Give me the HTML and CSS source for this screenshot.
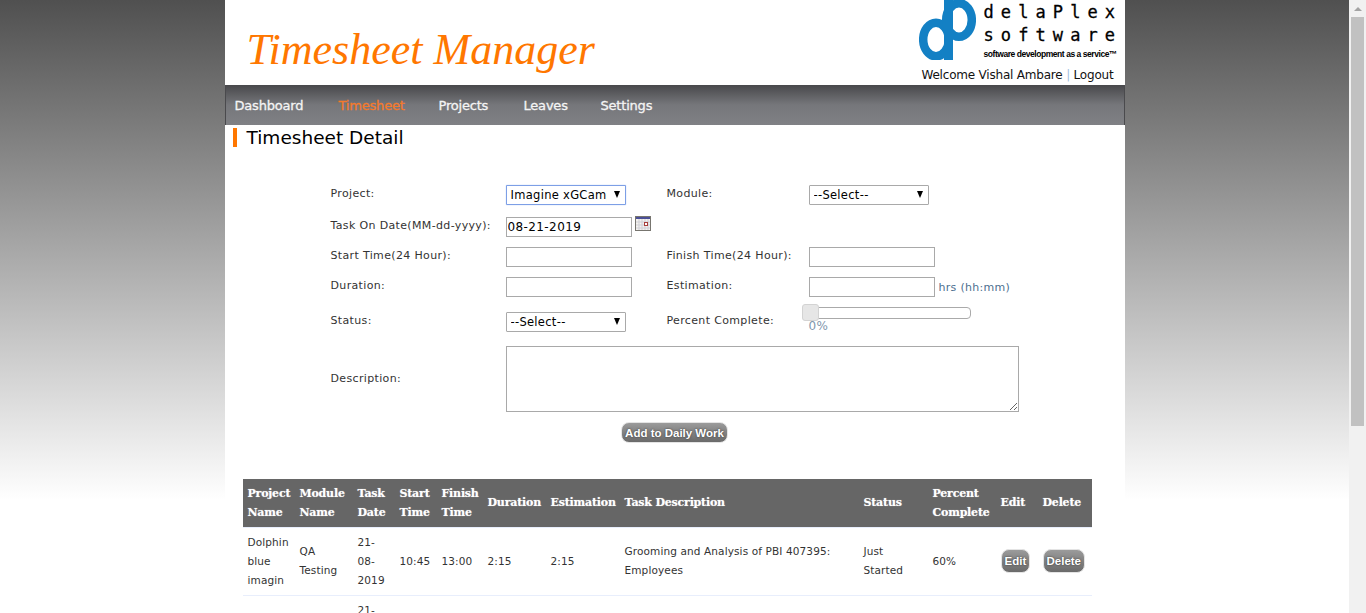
FILE: index.html
```html
<!DOCTYPE html>
<html lang="en">
<head>
    <meta charset="UTF-8">
    <meta name="viewport" content="width=device-width, initial-scale=1.0">
    <title>Timesheet Manager</title>
    <link rel="stylesheet" href="styles.css">
</head>
<body>

    <div class="viewport">
        <div class="page">

            <!-- header -->
            <div class="header">
                <div class="app-title">Timesheet Manager</div>
                <div class="header-right">
                    <div class="logo">
                        <svg class="logo-mark" width="57" height="60" viewBox="0 0 57 60">
                            <g fill="none" stroke="#1380c4" stroke-width="8.5">
                                <ellipse cx="17" cy="39.5" rx="12.8" ry="16.8"/>
                                <ellipse cx="40" cy="20" rx="12.8" ry="16.8"/>
                            </g>
                            <rect x="25" y="0" width="9" height="60" fill="#1380c4"/>
                        </svg>
                        <div class="logo-text">
                            <div class="logo-name">delaPlex</div>
                            <div class="logo-name">software</div>
                            <div class="logo-tag">software development as a service™</div>
                        </div>
                    </div>
                    <div class="welcome">Welcome Vishal Ambare <span class="sep">|</span> Logout</div>
                </div>
            </div>

            <!-- menu -->
            <div class="nav">
                <a class="nav-dashboard">Dashboard</a>
                <a class="nav-timesheet active">Timesheet</a>
                <a class="nav-projects">Projects</a>
                <a class="nav-leaves">Leaves</a>
                <a>Settings</a>
            </div>

            <h1 class="page-title">Timesheet Detail</h1>

            <div class="form-grid">
                <label>Project:</label>
                <div class="select-wrap"><select class="field-select focused"><option>Imagine xGCamp</option></select></div>
                <label>Module:</label>
                <div class="select-wrap"><select class="field-select"><option>--Select--</option></select></div>

                <label>Task On Date(MM-dd-yyyy):</label>
                <div class="date-cell">
                    <input class="field-text" type="text" value="08-21-2019">
                    <svg class="cal-icon" width="16" height="15" viewBox="0 0 16 15">
                        <rect x="0.5" y="0.5" width="15" height="14" fill="#f4f2ee" stroke="#77756f"/>
                        <rect x="1" y="1" width="14" height="2" fill="#4b4f96"/>
                        <path d="M1 6h14M1 9h14M1 12h14M4 3v11M7 3v11M10 3v11M13 3v11" stroke="#cfcfd6" stroke-width="1"/>
                        <rect x="9.5" y="6.5" width="3" height="3" fill="#fff" stroke="#a8403c"/>
                    </svg>
                </div>
                <div></div>
                <div></div>

                <label>Start Time(24 Hour):</label>
                <div><input class="field-text" type="text"></div>
                <label>Finish Time(24 Hour):</label>
                <div><input class="field-text" type="text"></div>

                <label>Duration:</label>
                <div><input class="field-text" type="text"></div>
                <label>Estimation:</label>
                <div class="est-cell"><input class="field-text" type="text"><span class="hint">hrs (hh:mm)</span></div>

                <label>Status:</label>
                <div class="select-wrap"><select class="field-select"><option>--Select--</option></select></div>
                <label>Percent Complete:</label>
                <div class="slider-cell">
                    <div class="slider"><span class="slider-handle"></span></div>
                    <div class="slider-value">0%</div>
                </div>

                <label class="row-d">Description:</label>
                <div class="row-d desc-cell"><textarea class="field-area"></textarea></div>
            </div>

            <div class="add-row"><button class="gray-btn">Add to Daily Work</button></div>

            <table class="work-table">
                <colgroup>
                    <col class="c-project"><col class="c-module"><col class="c-date"><col class="c-start"><col class="c-finish"><col class="c-duration"><col class="c-est"><col class="c-desc"><col class="c-status"><col class="c-percent"><col class="c-edit"><col class="c-delete">
                </colgroup>
                <thead>
                    <tr>
                        <th>Project Name</th><th>Module Name</th><th>Task Date</th><th>Start Time</th><th>Finish Time</th><th>Duration</th><th>Estimation</th><th>Task Description</th><th>Status</th><th>Percent Complete</th><th>Edit</th><th>Delete</th>
                    </tr>
                </thead>
                <tbody>
                    <tr>
                        <td>Dolphin blue imagin</td><td>QA Testing</td><td>21-08-2019</td><td>10:45</td><td>13:00</td><td>2:15</td><td>2:15</td><td>Grooming and Analysis of PBI 407395: Employees</td><td>Just Started</td><td>60%</td>
                        <td><button class="gray-btn small">Edit</button></td>
                        <td><button class="gray-btn small">Delete</button></td>
                    </tr>
                    <tr>
                        <td></td><td></td><td>21-08-2019</td><td></td><td></td><td></td><td></td><td></td><td></td><td></td><td></td><td></td>
                    </tr>
                </tbody>
            </table>
        </div>
    </div>

    <!-- window scrollbar -->
    <div class="scrollbar">
        <div class="scroll-arrow"></div>
        <div class="scroll-thumb"></div>
    </div>

</body>
</html>
```

FILE: styles.css
```css
html, body {
    height: 100%;
    margin: 0;
    overflow: hidden;
}

body {
    display: flex;
    font-family: "DejaVu Sans", sans-serif;
    font-size: 11px;
    color: #333;
    background: #fff;
}

.viewport {
    flex: 1;
    height: 100%;
    overflow: hidden;
    background: linear-gradient(#505050 0, #ffffff 500px);
}

.page {
    width: 900px;
    margin: 0 auto;
    padding-bottom: 40px;
    background: #fff;
}

/* header */
.header {
    height: 85px;
    display: flex;
    justify-content: space-between;
}

.app-title {
    margin: 24px 0 0 22px;
    font-family: "Liberation Serif", serif;
    font-style: italic;
    font-size: 44px;
    line-height: 52px;
    color: #ff7700;
}

.header-right {
    width: 206px;
}

.logo {
    display: flex;
    height: 63px;
}

.logo-mark {
    margin-right: 8px;
    flex: none;
}

.logo-text {
    padding-top: 1px;
    color: #000;
}

.logo-name {
    font-family: "DejaVu Sans Mono", monospace;
    font-size: 17px;
    line-height: 23px;
    letter-spacing: 7.1px;
    -webkit-text-stroke: 0.3px #000;
}

.logo-tag {
    margin-top: 3px;
    font-family: "Liberation Sans", sans-serif;
    font-size: 8.5px;
    font-weight: bold;
    line-height: 9px;
    white-space: nowrap;
    letter-spacing: -0.45px;
}

.welcome {
    margin-right: 11px;
    text-align: right;
    font-size: 12px;
    line-height: 24px;
    color: #111;
    white-space: nowrap;
    letter-spacing: -0.2px;
}

.sep {
    color: #9fbfe0;
}

/* menu */
.nav {
    height: 40px;
    display: flex;
    align-items: center;
    padding-left: 9px;
    box-sizing: border-box;
    border-left: 1px solid #4a4a4d;
    border-right: 1px solid #4a4a4d;
    background: linear-gradient(#48484b 0, #76777b 20px, #808185 100%);
    font-size: 13px;
    letter-spacing: -0.2px;
    color: #f4f4f4;
    -webkit-text-stroke: 0.3px currentColor;
}

.nav-dashboard { width: 104px; }
.nav-timesheet { width: 100px; }
.nav-projects { width: 85px; }
.nav-leaves { width: 77px; }

.nav .active {
    color: #f47a2c;
}

.page-title {
    margin: 3px 0 0 8px;
    padding-left: 10px;
    border-left: 4px solid #ff7700;
    font-size: 18.5px;
    font-weight: normal;
    line-height: 19px;
    color: #000;
}

/* form */
.form-grid {
    display: grid;
    grid-template-columns: 175px 161px 142px 316px;
    grid-template-rows: 32px 30px 30px 35px 34px 66px;
    margin: 38px 0 0 106px;
    align-items: start;
}

.form-grid label {
    line-height: 18px;
    letter-spacing: 0.35px;
}

.field-text {
    box-sizing: border-box;
    width: 126px;
    height: 20px;
    margin: 0;
    padding: 1px;
    border: 1px solid #a9a9a9;
    font-family: "DejaVu Sans", sans-serif;
    font-size: 12px;
    letter-spacing: 0.4px;
    color: #000;
    background: #fff;
    vertical-align: top;
}

/* native arrow replaced so it reads as the small black triangle */
.select-wrap {
    position: relative;
    width: 120px;
    height: 20px;
}

.select-wrap::after {
    content: "";
    position: absolute;
    top: 6px;
    right: 6px;
    border-left: 3.5px solid transparent;
    border-right: 3.5px solid transparent;
    border-top: 7px solid #000;
    pointer-events: none;
}

.field-select {
    appearance: none;
    box-sizing: border-box;
    width: 120px;
    height: 20px;
    margin: 0;
    padding: 0 18px 0 4px;
    border: 1px solid #a9a9a9;
    border-radius: 1px;
    font-family: "DejaVu Sans", sans-serif;
    font-size: 11.5px;
    letter-spacing: 0.3px;
    color: #000;
    background: #fff;
}

.focused {
    border-color: #7d9fe6;
    box-shadow: 0 0 1px #7d9fe6;
}

.date-cell {
    display: flex;
    align-items: flex-start;
}

.cal-icon {
    margin: -1px 0 0 3px;
}

.est-cell {
    display: flex;
    white-space: nowrap;
}

.hint {
    margin-left: 4px;
    line-height: 22px;
    letter-spacing: 0.3px;
    color: #4d6f8f;
}

.slider-cell {
    margin-top: -5px;
}

.slider {
    position: relative;
    box-sizing: border-box;
    width: 162px;
    height: 12px;
    border: 1px solid #aaa;
    border-radius: 4px;
    background: #fff;
}

.slider-handle {
    position: absolute;
    top: -4px;
    left: -8px;
    width: 15px;
    height: 15px;
    border: 1px solid #d3d3d3;
    border-radius: 3px;
    background: #e6e6e6;
}

.slider-value {
    font-size: 12px;
    line-height: 14px;
    letter-spacing: 0.4px;
    color: #7f97ad;
}

.form-grid .row-d {
    display: flex;
    align-items: center;
    height: 66px;
}

.desc-cell {
    grid-column: 2 / 5;
}

.field-area {
    box-sizing: border-box;
    width: 513px;
    height: 66px;
    margin: 0;
    border: 1px solid #a9a9a9;
    background: #fff;
}

.add-row {
    margin-top: 10px;
    text-align: center;
}

.gray-btn {
    height: 21px;
    padding: 0 3px;
    border: 1px solid #e4e4e4;
    border-radius: 8px;
    background: linear-gradient(#9b9b9b, #6a6a6a);
    font-family: "Liberation Sans", sans-serif;
    font-size: 11.5px;
    font-weight: bold;
    color: #fff;
    text-shadow: 0 0 2px #333;
}

/* table */
.work-table {
    width: 849px;
    margin: 36px 0 0 18px;
    table-layout: fixed;
    border-collapse: collapse;
}

.c-project { width: 52px; }
.c-module { width: 58px; }
.c-date { width: 42px; }
.c-start { width: 42px; }
.c-finish { width: 46px; }
.c-duration { width: 63px; }
.c-est { width: 74px; }
.c-desc { width: 239px; }
.c-status { width: 69px; }
.c-percent { width: 68px; }
.c-edit { width: 42px; }
.c-delete { width: 54px; }

.work-table th {
    height: 48px;
    padding: 0 5px;
    box-sizing: border-box;
    text-align: left;
    background: #666;
    border-bottom: 1px solid #e8eefc;
    font-family: "DejaVu Serif", serif;
    font-size: 11px;
    line-height: 19px;
    letter-spacing: -0.2px;
    color: #fff;
    text-shadow: 0 0 1px rgba(255, 255, 255, 0.6);
}

.work-table td {
    height: 67px;
    padding: 0 5px;
    border-bottom: 1px solid #e8eefc;
    font-size: 10.5px;
    line-height: 19px;
    letter-spacing: 0.12px;
    color: #333;
}

.gray-btn.small {
    height: 24px;
    padding: 0 3px;
}

/* window scrollbar */
.scrollbar {
    flex: none;
    width: 17px;
    height: 100%;
    background: #f1f1f1;
}

.scroll-arrow {
    width: 0;
    height: 0;
    margin: 7px auto 0;
    border-left: 4px solid transparent;
    border-right: 4px solid transparent;
    border-bottom: 4px solid #a3a3a3;
}

.scroll-thumb {
    width: 13px;
    height: 409px;
    margin: 6px auto 0;
    background: #c1c1c1;
}
```
